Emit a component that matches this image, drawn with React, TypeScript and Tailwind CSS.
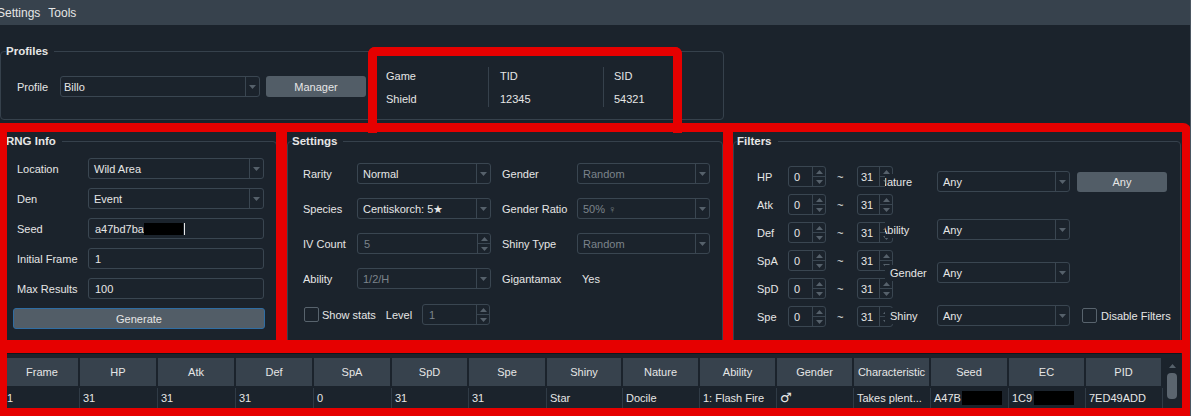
import React from "react";

const Down = () => (
  <svg width="7" height="4" viewBox="0 0 7 4">
    <path d="M0 0h7L3.5 4z" fill="#56616b" />
  </svg>
);

const Up = () => (
  <svg width="7" height="4" viewBox="0 0 7 4">
    <path d="M0 4h7L3.5 0z" fill="#56616b" />
  </svg>
);

type BoxProps = { value: string; w: string; dim?: boolean; pad?: string };

function Combo({ value, w, dim, pad = "pl-[5px]" }: BoxProps) {
  return (
    <div className={`${w} flex h-[21px] shrink-0 items-center rounded-[3px] border border-[#3a4651]`}>
      <span className={`flex-1 truncate ${pad} ${dim ? "text-[#7b838b]" : ""}`}>{value}</span>
      <span className="flex h-full w-[14px] items-center justify-center border-l border-[#3a4651]">
        <Down />
      </span>
    </div>
  );
}

function Spin({ value, w, dim, pad = "pl-[6px]" }: BoxProps) {
  return (
    <div className={`${w} flex h-[21px] shrink-0 items-center overflow-hidden rounded-[3px] border border-[#3a4651]`}>
      <span className={`flex-1 ${pad} ${dim ? "text-[#7b838b]" : ""}`}>{value}</span>
      <span className="flex h-full w-[13px] flex-col border-l border-[#3a4651]">
        <span className="flex flex-1 items-center justify-center border-b border-[#3a4651]">
          <Up />
        </span>
        <span className="flex flex-1 items-center justify-center">
          <Down />
        </span>
      </span>
    </div>
  );
}

function Field({ children, w }: { children: React.ReactNode; w: string }) {
  return (
    <div className={`${w} flex h-[21px] shrink-0 items-center rounded-[3px] border border-[#3a4651] pl-[6px]`}>
      {children}
    </div>
  );
}

function Check() {
  return <span className="block h-[15px] w-[15px] shrink-0 rounded-[2px] border border-[#58636d]" />;
}

const rngRows = [
  ["Location", "combo", "Wild Area"],
  ["Den", "combo", "Event"],
  ["Seed", "seed", ""],
  ["Initial Frame", "input", "1"],
  ["Max Results", "input", "100"],
];

const ivs = ["HP", "Atk", "Def", "SpA", "SpD", "Spe"];

const columns: [string, number, string][] = [
  ["Frame", 74, "1"],
  ["HP", 78, "31"],
  ["Atk", 78, "31"],
  ["Def", 78, "31"],
  ["SpA", 78, "0"],
  ["SpD", 77, "31"],
  ["Spe", 78, "31"],
  ["Shiny", 76, "Star"],
  ["Nature", 77, "Docile"],
  ["Ability", 77, "1: Flash Fire"],
  ["Gender", 77, "♂"],
  ["Characteristic", 77, "Takes plent..."],
  ["Seed", 78, "A47B"],
  ["EC", 77, "1C9"],
  ["PID", 77, "7ED49ADD"],
];

function ProfilesBox() {
  return (
    <fieldset className="mt-[19px] h-[76px] w-[724px] rounded-[4px] border border-[#36414c]">
      <legend className="ml-[5px] pr-[6px] text-[11.5px] font-bold">Profiles</legend>
      <div className="flex h-full items-center pb-[4px]">
        <span className="w-[59px] shrink-0 pl-[16px]">Profile</span>
        <Combo value="Billo" w="w-[200px]" pad="pl-[3px]" />
        <button className="ml-[6px] h-[21px] w-[100px] rounded-[3px] bg-[#525d67]">Manager</button>
        <div className="ml-[11px] flex h-[40px]">
          <div className="flex w-[111px] flex-col justify-between pb-[1px] pl-[9px] pt-[2px]">
            <span>Game</span>
            <span>Shield</span>
          </div>
          <div className="w-[1px] bg-[#36414c]" />
          <div className="flex w-[114px] flex-col justify-between pb-[1px] pl-[11px] pt-[2px]">
            <span>TID</span>
            <span>12345</span>
          </div>
          <div className="w-[1px] bg-[#36414c]" />
          <div className="flex flex-col justify-between pb-[1px] pl-[10px] pt-[2px]">
            <span>SID</span>
            <span>54321</span>
          </div>
        </div>
      </div>
    </fieldset>
  );
}

function RngBox() {
  return (
    <fieldset className="h-[214px] w-[277px] shrink-0 rounded-[4px] border border-[#36414c]">
      <legend className="ml-[5px] pr-[6px] text-[11.5px] font-bold">RNG Info</legend>
      <div className="flex flex-col gap-[9px] pl-[16px] pt-[10px]">
        {rngRows.map(([label, kind, value]) => (
          <div key={label} className="flex items-center">
            <span className="w-[71px] shrink-0">{label}</span>
            {kind === "combo" && <Combo value={value} w="w-[176px]" />}
            {kind === "input" && <Field w="w-[176px]">{value}</Field>}
            {kind === "seed" && (
              <Field w="w-[176px]">
                <span>a47bd7baf</span>
                <span className="ml-[-3px] h-[12px] w-[39px] bg-black" />
                <span className="ml-[1px] h-[12px] w-[1px] bg-[#e6e6e6]" />
              </Field>
            )}
          </div>
        ))}
        <button className="ml-[-4px] h-[21px] w-[252px] rounded-[3px] border border-[#2f6da3] bg-[#525d67]">
          Generate
        </button>
      </div>
    </fieldset>
  );
}

function SettingsBox() {
  return (
    <fieldset className="ml-[10px] h-[214px] w-[436px] shrink-0 rounded-[4px] border border-[#36414c]">
      <legend className="ml-[4px] pr-[6px] text-[11.5px] font-bold">Settings</legend>
      <div className="grid grid-cols-[54px_134px_86px_133px] items-center gap-y-[14px] whitespace-nowrap pl-[15px] pt-[15px]">
        <span>Rarity</span>
        <Combo value="Normal" w="w-[134px]" />
        <span className="pl-[11px]">Gender</span>
        <Combo value="Random" w="w-[133px]" dim />

        <span>Species</span>
        <Combo value="Centiskorch: 5★" w="w-[134px]" />
        <span className="pl-[11px]">Gender Ratio</span>
        <Combo value="50% ♀" w="w-[133px]" dim />

        <span>IV Count</span>
        <Spin value="5" w="w-[134px]" dim />
        <span className="pl-[11px]">Shiny Type</span>
        <Combo value="Random" w="w-[133px]" dim />

        <span>Ability</span>
        <Combo value="1/2/H" w="w-[134px]" dim />
        <span className="pl-[11px]">Gigantamax</span>
        <span className="pl-[5px]">Yes</span>
      </div>
      <div className="mt-[15px] flex items-center pl-[16px]">
        <Check />
        <span className="ml-[3px]">Show stats</span>
        <span className="ml-[10px]">Level</span>
        <div className="ml-[10px]">
          <Spin value="1" w="w-[68px]" dim />
        </div>
      </div>
    </fieldset>
  );
}

function FilterLabel({ text, shift }: { text: string; shift: string }) {
  return (
    <span className="relative h-[16px] w-[52px] shrink-0 overflow-hidden bg-[#1b232c] pt-[1px]">
      <span className={`block whitespace-nowrap ${shift}`}>{text}</span>
    </span>
  );
}

function FiltersBox() {
  return (
    <fieldset className="ml-[10px] h-[214px] w-[448px] shrink-0 rounded-[4px] border border-[#36414c]">
      <legend className="ml-[3px] pr-[6px] text-[11.5px] font-bold">Filters</legend>
      <div className="flex">
        <div className="flex flex-col gap-[7px] pl-[23px] pt-[18px]">
          {ivs.map((iv) => (
            <div key={iv} className="flex items-center">
              <span className="w-[31px] shrink-0">{iv}</span>
              <Spin value="0" w="w-[38px]" pad="pl-[5px]" />
              <span className="w-[31px] shrink-0 pl-[11px]">~</span>
              <Spin value="31" w="w-[36px]" pad="pl-[3px]" />
            </div>
          ))}
        </div>
        <div className="relative z-[1] ml-[-8px] flex flex-col">
          <div className="mt-[23px] flex items-center">
            <FilterLabel text="Nature" shift="ml-[-6px]" />
            <Combo value="Any" w="w-[133px]" />
            <button className="ml-[7px] h-[20px] w-[90px] rounded-[3px] bg-[#525d67]">Any</button>
          </div>
          <div className="mt-[27px] flex items-center">
            <FilterLabel text="Ability" shift="ml-[-5px]" />
            <Combo value="Any" w="w-[133px]" />
          </div>
          <div className="mt-[22px] flex items-center">
            <FilterLabel text="Gender" shift="pl-[5px]" />
            <Combo value="Any" w="w-[133px]" />
          </div>
          <div className="mt-[22px] flex items-center">
            <FilterLabel text="Shiny" shift="pl-[5px]" />
            <Combo value="Any" w="w-[133px]" />
            <span className="ml-[12px]">
              <Check />
            </span>
            <span className="ml-[4px]">Disable Filters</span>
          </div>
        </div>
      </div>
    </fieldset>
  );
}

function ResultsTable() {
  return (
    <div className="ml-[6px] mt-[5px] flex w-[1175px] border-t border-[#10161c] pt-[4px]">
      <div className="flex flex-col">
        <div className="flex h-[28px]">
          {columns.map(([name, w]) => (
            <div
              key={name}
              style={{ width: w }}
              className="flex items-center justify-center border-r-2 border-[#1b232c] bg-[#37424d]"
            >
              {name}
            </div>
          ))}
        </div>
        <div className="flex h-[22px] pt-[2px]">
          {columns.map(([name, w, value], i) => (
            <div
              key={name}
              style={{ width: w }}
              className={`flex items-center border-r border-[#303b46] ${i === 0 ? "pl-[1px]" : "pl-[3px]"}`}
            >
              <span
                className={`whitespace-nowrap ${name === "Gender" ? "font-['DejaVu_Sans',sans-serif] text-[13px]" : ""}`}
              >
                {value}
              </span>
              {(name === "Seed" || name === "EC") && (
                <span className={`h-[14px] bg-black ${name === "Seed" ? "ml-[1px] w-[40px]" : "ml-[2px] w-[40px]"}`} />
              )}
            </div>
          ))}
        </div>
      </div>
      <div className="flex w-[18px] flex-col items-center pt-[6px]">
        <Up />
        <span className="mt-[5px] h-[26px] w-[10px] rounded-[4px] bg-[#5b656f]" />
      </div>
    </div>
  );
}

function Annotations() {
  return (
    <div className="pointer-events-none absolute inset-0 z-10">
      <div className="absolute left-[368px] top-[47px] h-[86px] w-[314px] rounded-t-[7px] border-[9px] border-b-0 border-[#e60000]" />
      <div className="absolute left-0 top-[123px] h-[9px] w-[1191px] rounded-tl-[3px] rounded-tr-[8px] bg-[#e60000]" />
      <div className="absolute left-0 top-[123px] h-[293px] w-[7px] bg-[#e60000]" />
      <div className="absolute left-[276px] top-[123px] h-[230px] w-[11px] bg-[#e60000]" />
      <div className="absolute left-[723px] top-[123px] h-[230px] w-[10px] bg-[#e60000]" />
      <div className="absolute left-[1182px] top-[124px] h-[292px] w-[9px] rounded-tr-[8px] bg-[#e60000]" />
      <div className="absolute left-0 top-[340px] h-[13px] w-[1191px] bg-[#e60000]" />
      <div className="absolute left-0 top-[408px] h-[8px] w-[1191px] bg-[#e60000]" />
    </div>
  );
}

export default function App() {
  return (
    <div className="relative h-[416px] w-[1191px] overflow-hidden border-r border-[#4b5661] bg-[#1b232c] font-['Liberation_Sans',Arial,sans-serif] text-[11px] leading-[14px] text-[#e6e6e6]">
      <div className="flex h-[25px] items-center gap-[8px] bg-[#37424d] text-[12px]">
        <span className="ml-[-3px]">Settings</span>
        <span>Tools</span>
      </div>
      <ProfilesBox />
      <div className="mt-[14px] flex">
        <RngBox />
        <SettingsBox />
        <FiltersBox />
      </div>
      <ResultsTable />
      <Annotations />
    </div>
  );
}
